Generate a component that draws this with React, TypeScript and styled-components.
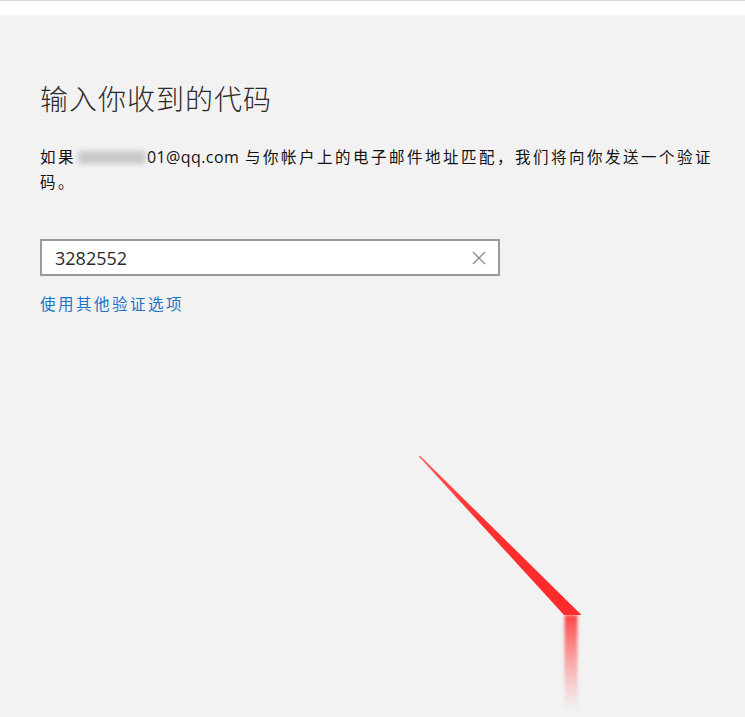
import React from "react";
import styled, { createGlobalStyle } from "styled-components";

const Global = createGlobalStyle`
  html, body { margin: 0; padding: 0; background: #f2f2f2; }
  body { font-family: "Noto Sans CJK SC", "Noto Sans", sans-serif; color: #1f1f1f; }
  #root { min-height: 717px; }
`;

const Page = styled.div`
  position: relative;
  width: 745px;
  height: 717px;
  overflow: hidden;
  background: #f2f2f2;
  display: flex;
  flex-direction: column;
`;

const TopBar = styled.div`
  height: 13px;
  flex: none;
  background: #ffffff;
  border-top: 1px solid #d9d9d9;
  box-shadow: 0 1px 1px rgba(255, 255, 255, 0.8);
`;

const Content = styled.main`
  display: flex;
  flex-direction: column;
  align-items: flex-start;
  padding: 66px 0 0 40px;
`;

const Title = styled.h1`
  margin: 0;
  font-size: 28px;
  line-height: 36px;
  font-weight: 300;
  color: #2b2b2b;
  letter-spacing: 1px;
`;

const Description = styled.p`
  margin: 28px 0 0;
  font-size: 15.5px;
  line-height: 24px;
  font-weight: 400;
  color: #111111;
  letter-spacing: 2.5px;
  width: 705px;
  white-space: nowrap;
`;

const Masked = styled.span`
  display: inline-block;
  width: 68px;
  height: 13px;
  margin: 0 0 -1px 2px;
  background: #c9c9c9;
  border-radius: 4px;
  filter: blur(2.5px);
  vertical-align: baseline;
`;

const Email = styled.span`
  font-family: "Open Sans", "Noto Sans", sans-serif;
  font-size: 16px;
  letter-spacing: 0.4px;
  margin-left: 1px;
`;

const Field = styled.div`
  margin-top: 46px;
  width: 460px;
  height: 37px;
  box-sizing: border-box;
  border: 2px solid #9a9a9a;
  background: #ffffff;
  display: flex;
  align-items: center;
  padding: 0 12px 0 13px;
`;

const FieldValue = styled.span`
  flex: 1;
  font-family: "Open Sans", "Noto Sans", sans-serif;
  font-size: 18px;
  color: #2a2a2a;
`;

const ClearIcon = styled.svg`
  width: 14px;
  height: 14px;
  flex: none;
`;

const Link = styled.a`
  margin-top: 16px;
  font-size: 15.5px;
  line-height: 22px;
  letter-spacing: 2.5px;
  color: #1a73c9;
  text-decoration: none;
  cursor: pointer;
`;

const Overlay = styled.svg`
  position: absolute;
  left: 0;
  top: 0;
  width: 745px;
  height: 717px;
  pointer-events: none;
`;

export default function App() {
  return (
    <>
      <Global />
      <Page>
        <TopBar />
        <Content>
          <Title>输入你收到的代码</Title>
          <Description>
            如果<Masked />
            <Email>01@qq.com</Email> 与你帐户上的电子邮件地址匹配，我们将向你发送一个验证
            <br />
            码。
          </Description>
          <Field>
            <FieldValue>3282552</FieldValue>
            <ClearIcon viewBox="0 0 14 14">
              <path d="M1 1 L13 13 M13 1 L1 13" stroke="#8a8a8a" strokeWidth="1.3" fill="none" />
            </ClearIcon>
          </Field>
          <Link>使用其他验证选项</Link>
        </Content>
        <Overlay viewBox="0 0 745 717">
          <defs>
            <linearGradient id="diag" x1="419" y1="456" x2="578" y2="615" gradientUnits="userSpaceOnUse">
              <stop offset="0" stopColor="#ff5a5a" />
              <stop offset="0.4" stopColor="#ff3030" />
              <stop offset="1" stopColor="#ff2a2a" />
            </linearGradient>
            <linearGradient id="tail" x1="0" y1="615" x2="0" y2="712" gradientUnits="userSpaceOnUse">
              <stop offset="0" stopColor="#ff3030" stopOpacity="0.9" />
              <stop offset="0.45" stopColor="#ff5050" stopOpacity="0.5" />
              <stop offset="1" stopColor="#ff8080" stopOpacity="0" />
            </linearGradient>
            <filter id="soft" x="-30%" y="-5%" width="160%" height="110%">
              <feGaussianBlur stdDeviation="1.4" />
            </filter>
          </defs>
          <polygon points="418.5,456 420.5,456.3 581.5,615 564,615" fill="url(#diag)" />
          <rect x="564.5" y="615" width="13" height="97" fill="url(#tail)" filter="url(#soft)" />
        </Overlay>
      </Page>
    </>
  );
}
